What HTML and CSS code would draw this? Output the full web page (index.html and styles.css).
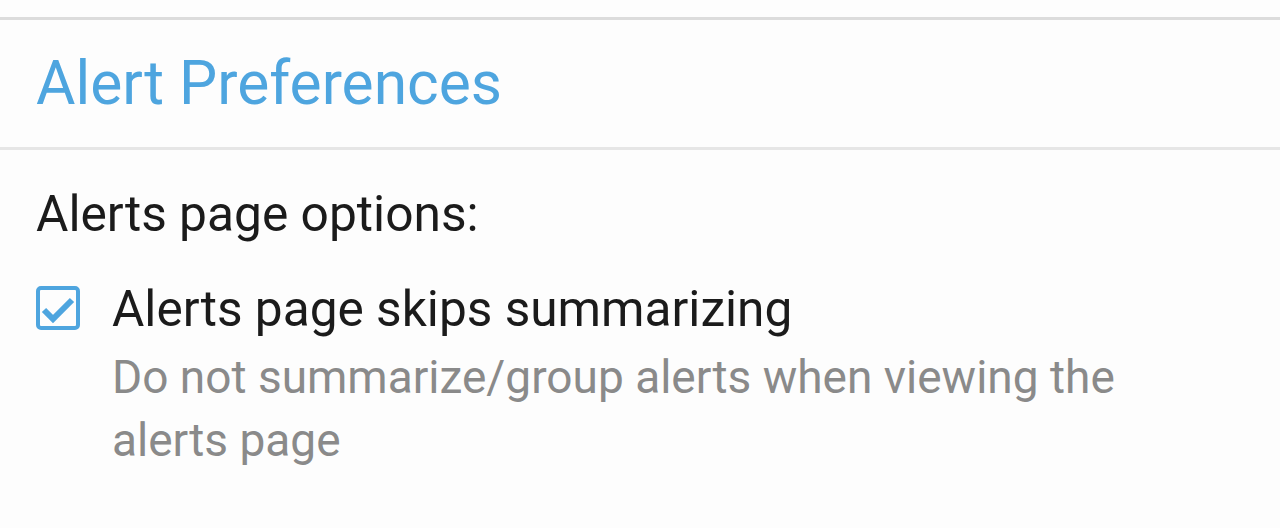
FILE: index.html
```html
<!DOCTYPE html>
<html lang="en">
<head>
  <meta charset="UTF-8" />
  <meta name="viewport" content="width=device-width, initial-scale=1.0"/>
  <title>Alert Preferences</title>
  <link rel="stylesheet" href="styles.css">
</head>
<body>
  <div class="top-gap"></div>
  <header class="section-head">
    <h1>Alert Preferences</h1>
  </header>

  <div class="options">
    <h2>Alerts page options:</h2>
    <label class="option">
      <span class="check">
        <svg width="44" height="44" viewBox="0 0 44 44">
          <rect x="2" y="2" width="40" height="40" rx="3" fill="none" stroke="#4ea5df" stroke-width="4"/>
          <path d="M8 24 L17 33 L36 14" fill="none" stroke="#4ea5df" stroke-width="6"/>
        </svg>
      </span>
      <span class="option-text">
        <span class="option-title">Alerts page skips summarizing</span>
        <span class="option-desc">Do not summarize/group alerts when viewing the alerts page</span>
      </span>
    </label>
  </div>
</body>
</html>
```

FILE: styles.css
```css
body {
  font-family: Roboto, "Noto Sans", sans-serif;
  background: #fdfdfd;
  margin: 0;
  padding: 0;
}
.top-gap {
  height: 17px;
}
.section-head {
  border-top: 3px solid #dcdcdc;
  border-bottom: 3px solid #e6e6e6;
  padding: 32px 36px;
}
h1 {
  margin: 0;
  font-size: 60.5px;
  line-height: 63px;
  font-weight: 400;
  color: #4ea5df;
}
.options {
  padding: 34px 36px 0 36px;
}
h2 {
  margin: 0;
  font-size: 49.7px;
  line-height: 60px;
  font-weight: 400;
  color: #1b1b1b;
}
.option {
  display: flex;
  align-items: flex-start;
  gap: 32px;
  margin-top: 35px;
}
.check {
  display: block;
  width: 44px;
  height: 44px;
  margin-top: 7px;
}
.check svg {
  display: block;
}
.option-text {
  display: flex;
  flex-direction: column;
  width: 1040px;
}
.option-title {
  font-size: 49.6px;
  line-height: 60px;
  color: #1b1b1b;
}
.option-desc {
  margin-top: 7px;
  font-size: 46px;
  line-height: 63px;
  color: #8a8a8a;
}
```
